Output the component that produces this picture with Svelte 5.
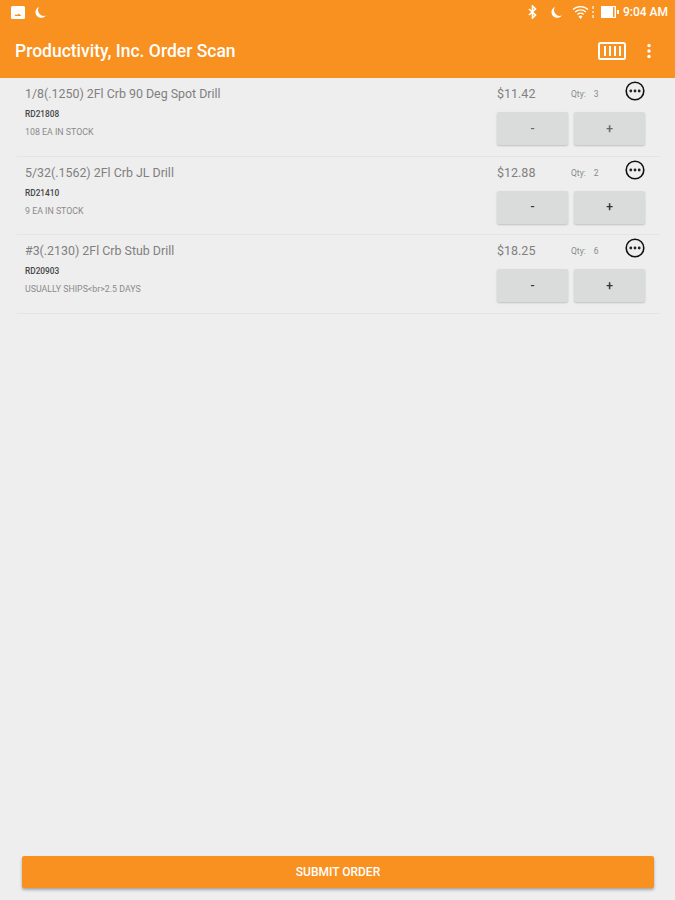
<script>
    const items = [
        { name: '1/8(.1250) 2Fl Crb 90 Deg Spot Drill', sku: 'RD21808', stock: '108 EA IN STOCK', price: '$11.42', qty: 3 },
        { name: '5/32(.1562) 2Fl Crb JL Drill', sku: 'RD21410', stock: '9 EA IN STOCK', price: '$12.88', qty: 2 },
        { name: '#3(.2130) 2Fl Crb Stub Drill', sku: 'RD20903', stock: 'USUALLY SHIPS<br>2.5 DAYS', price: '$18.25', qty: 6 }
    ];
</script>

<main>
    <header>
        <div class="status">
            <svg width="14" height="13" viewBox="0 0 14 13"><path fill="#fff" d="M1.500 0h11A1.500 1.500 0 0 1 14 1.500v10a1.500 1.500 0 0 1-1.500 1.500h-11A1.500 1.500 0 0 1 0 11.500v-10A1.500 1.500 0 0 1 1.500 0z"/><path fill="#f8911f" d="M3.500 10l1.500-2 1 1.200L7.500 7.500 10.500 10z"/></svg>
            <svg class="moon" width="13" height="13" viewBox="0 0 13 13"><path fill="#fff" d="M5 1a5.800 5.800 0 0 0 7 8.500A5.900 5.900 0 0 1 1.500 7 6 6 0 0 1 5 1z"/></svg>
            <span class="spacer"></span>
            <svg width="9" height="14" viewBox="0 0 9 14"><path fill="none" stroke="#fff" stroke-width="1.600" d="M1 4l6.500 6L4.500 13V1l3 3L1 10"/></svg>
            <svg class="moon2" width="13" height="13" viewBox="0 0 13 13"><path fill="#fff" d="M5 1a5.800 5.800 0 0 0 7 8.500A5.900 5.900 0 0 1 1.500 7 6 6 0 0 1 5 1z"/></svg>
            <svg class="wifi" width="17" height="14" viewBox="0 0 17 14"><g fill="none" stroke="#fff" stroke-width="1.300"><path d="M1 4.500a11 11 0 0 1 15 0"/><path d="M3.200 7a7.800 7.800 0 0 1 10.600 0"/><path d="M5.400 9.500a4.500 4.500 0 0 1 6.200 0"/></g><path fill="#fff" d="M8.500 14l-2-2.500a3 3 0 0 1 4 0z"/></svg>
            <svg class="sim" width="4" height="14" viewBox="0 0 4 14"><path fill="#fff" opacity=".6" d="M1 1h2v3H1zM1 6h2v2H1zM1 10h2v3H1z"/></svg>
            <svg class="batt" width="18" height="14" viewBox="0 0 18 14"><path fill="#fff" d="M0 1h15v12H0z"/><path fill="#fff" d="M16 5h2v4h-2z"/><path fill="#f8911f" d="M12 2h1.500v10H12z"/></svg>
            <span class="time">9:04 AM</span>
        </div>
        <div class="bar">
            <h1>Productivity, Inc. Order Scan</h1>
            <svg class="scan" width="28" height="18" viewBox="0 0 28 18">
                <rect x="1" y="1" width="26" height="16" rx="1.500" fill="none" stroke="#fff" stroke-width="2"/>
                <path stroke="#fff" stroke-width="2" d="M7 4v10M12 4v10M17 4v10M22 4v10"/>
            </svg>
            <svg class="more" width="4" height="16" viewBox="0 0 4 16"><circle cx="2" cy="2.500" r="1.700" fill="#fff"/><circle cx="2" cy="8" r="1.700" fill="#fff"/><circle cx="2" cy="13.500" r="1.700" fill="#fff"/></svg>
        </div>
    </header>

    <section class="list">
        {#each items as item, i}
            <div class="row">
                <div class="info">
                    <p class="name">{item.name}</p>
                    <p class="sku">{item.sku}</p>
                    <p class="stock">{item.stock}</p>
                </div>
                <div class="side">
                    <div class="top">
                        <span class="price">{item.price}</span>
                        <span class="qty">Qty:<span class="count">{item.qty}</span></span>
                        <svg class="dots" width="20" height="20" viewBox="0 0 20 20">
                            <circle cx="10" cy="10" r="8.800" fill="none" stroke="#111" stroke-width="1.600"/>
                            <circle cx="5.800" cy="10" r="1.400" fill="#222"/><circle cx="10" cy="10" r="1.400" fill="#222"/><circle cx="14.200" cy="10" r="1.400" fill="#222"/>
                        </svg>
                    </div>
                    <div class="btns">
                        <button class:faint={i === 0}>-</button>
                        <button class:faint={i === 0}>+</button>
                    </div>
                </div>
            </div>
        {/each}
    </section>

    <footer>
        <button class="submit">SUBMIT ORDER</button>
    </footer>
</main>

<style>
    :global(body) {
        margin: 0;
        background: #eeeeee;
    }

    main {
        height: 900px;
        display: flex;
        flex-direction: column;
        font-family: Roboto, "Liberation Sans", sans-serif;
        background: #eeeeee;
    }

    header {
        height: 78px;
        background: #f8911f;
        color: #fff;
    }

    .status {
        height: 24px;
        display: flex;
        align-items: center;
        padding: 0 7px 0 11px;
    }

    .moon {
        margin-left: 9px;
    }

    .spacer {
        flex: 1;
    }

    .moon2 {
        margin-left: 13px;
    }

    .wifi {
        margin-left: 9px;
    }

    .sim {
        margin-left: 2px;
    }

    .batt {
        margin-left: 6px;
    }

    .time {
        font-size: 12px;
        font-weight: 500;
        margin-left: 4px;
    }

    .bar {
        height: 54px;
        display: flex;
        align-items: center;
        padding: 0 24px 0 15px;
    }

    h1 {
        flex: 1;
        margin: 0;
        font-size: 17.500px;
        font-weight: 500;
    }

    .scan {
        margin: 0 21px 0 0;
    }

    .list {
        flex: 1;
        padding: 0 15px 0 17px;
    }

    .row {
        height: 78.700px;
        box-sizing: border-box;
        display: flex;
        justify-content: space-between;
        padding: 0 15px 0 8px;
        border-bottom: 1px solid #e4e4e4;
    }

    p {
        margin: 0;
    }

    .name {
        margin-top: 8px;
        font-size: 12.400px;
        line-height: 16px;
        color: #808080;
    }

    .sku {
        margin-top: 7px;
        font-size: 8.300px;
        line-height: 10px;
        font-weight: 500;
        color: #444;
    }

    .stock {
        margin-top: 8px;
        font-size: 8.800px;
        line-height: 10px;
        color: #8a8a8a;
    }

    .side {
        width: 148px;
    }

    .top {
        height: 34px;
        position: relative;
        display: flex;
        align-items: flex-start;
        box-sizing: border-box;
        padding-top: 8px;
    }

    .price {
        width: 74px;
        font-size: 12.500px;
        line-height: 16px;
        color: #808080;
    }

    .qty {
        font-size: 8.500px;
        line-height: 16px;
        color: #8a8a8a;
    }

    .count {
        margin-left: 8px;
    }

    .dots {
        position: absolute;
        right: 0;
        top: 3px;
    }

    .btns {
        display: flex;
        gap: 6px;
    }

    .btns button {
        width: 71px;
        height: 33px;
        border: 0;
        border-radius: 2px;
        padding: 0;
        background: #d9dcdb;
        box-shadow: 0 1px 2px rgba(0, 0, 0, .2);
        font-family: inherit;
        font-size: 12px;
        font-weight: 500;
        color: #333;
    }

    .btns button.faint {
        color: #666;
    }

    footer {
        padding: 0 21px 12px 22px;
    }

    .submit {
        width: 100%;
        height: 32px;
        border: 0;
        border-radius: 2px;
        background: #f8911f;
        box-shadow: 0 2px 3px rgba(0, 0, 0, .3);
        color: #fff;
        font-family: inherit;
        font-size: 12px;
        font-weight: 500;
    }
</style>
